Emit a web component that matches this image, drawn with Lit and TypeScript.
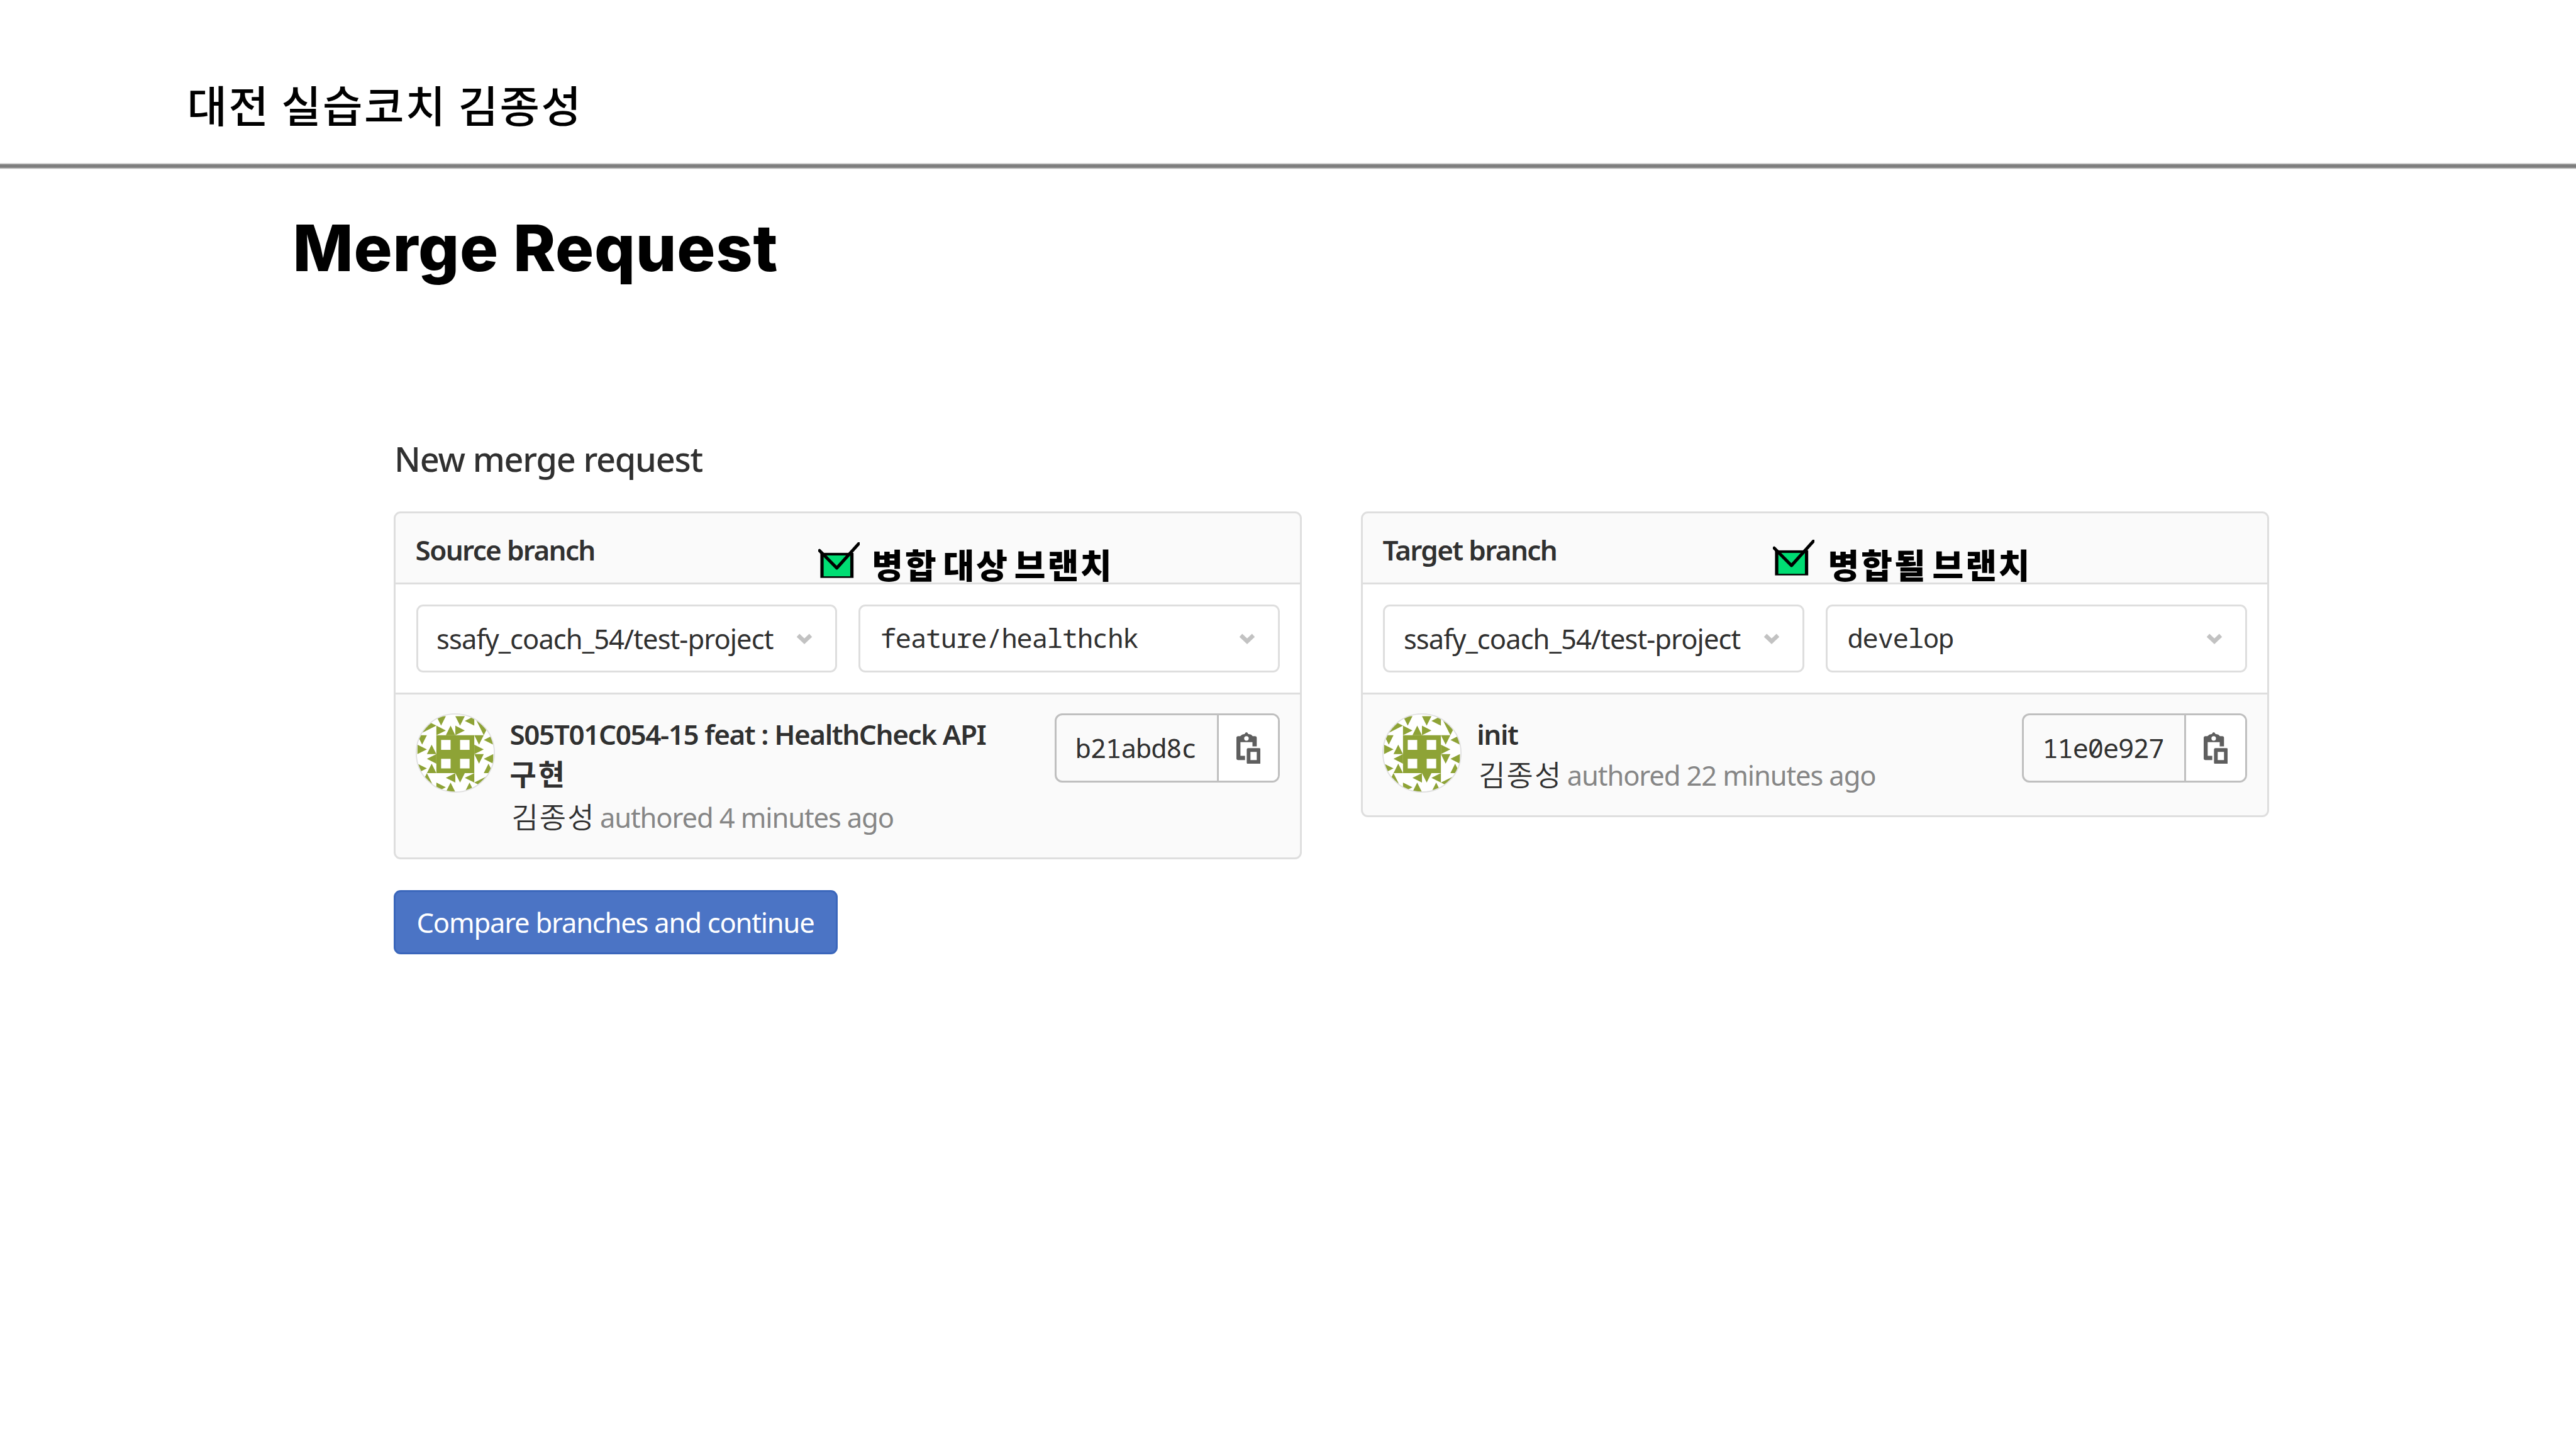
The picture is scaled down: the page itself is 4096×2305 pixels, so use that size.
import { LitElement, html, css, svg, nothing } from "lit";

interface Branch {
  kind: "source" | "target";
  label: string;
  note: string;
  project: string;
  branch: string;
  title: string;
  titleRest?: string;
  author: string;
  authored: string;
  sha: string;
}

const BRANCHES: Branch[] = [
  {
    kind: "source",
    label: "Source branch",
    note: "병합 대상 브랜치",
    project: "ssafy_coach_54/test-project",
    branch: "feature/healthchk",
    title: "S05T01C054-15 feat : HealthCheck API",
    titleRest: "구현",
    author: "김종성",
    authored: "authored 4 minutes ago",
    sha: "b21abd8c",
  },
  {
    kind: "target",
    label: "Target branch",
    note: "병합될 브랜치",
    project: "ssafy_coach_54/test-project",
    branch: "develop",
    title: "init",
    author: "김종성",
    authored: "authored 22 minutes ago",
    sha: "11e0e927",
  },
];

const chevron = html`<svg class="chevron" viewBox="0 0 26 17">
  <path d="M3 3 L13 12.4 L23 3" fill="none" stroke="#c2c2c2" stroke-width="6.6" />
</svg>`;

const clipboard = html`<svg class="clipboard" viewBox="120 166 170 222" fill="#5e5e5e">
  <path
    fill-rule="evenodd"
    d="M120 206 Q120 194 132 194 H146 L160 182 L178 178 Q182 166 190 166 Q198 166 202 178 L222 182 L234 194 H250 Q262 194 262 206 V265 H232 V235 H148 V331 H180 V360 H132 Q120 360 120 348 Z M206 209 A16 16 0 1 0 174 209 A16 16 0 1 0 206 209 Z"
  />
  <path
    fill-rule="evenodd"
    d="M202 277 H280 Q290 277 290 287 V378 Q290 388 280 388 H202 Q192 388 192 378 V287 Q192 277 202 277 Z M218 303 V360 H262 V303 Z"
  />
</svg>`;

const check = html`<svg class="check" viewBox="51 69 288 249">
  <rect x="66" y="143" width="232" height="175" fill="#000" />
  <rect x="89" y="161" width="186" height="146" fill="#00dd73" />
  <path
    d="M60 127 L181 249 L346 66"
    fill="none"
    stroke="#000"
    stroke-width="22"
    stroke-linecap="round"
    stroke-linejoin="round"
  />
</svg>`;

// One quarter of the identicon in grid units; the other three are rotations of it.
const QUARTER =
  "M-2-4H-1L-1.5-3Z M0-4H1L.5-3Z M2-4V-3L1-3.5Z M2-4L3-2L4-4Z M-2-3L-1-2.5L-2-2Z M-1-2H0L-.5-3Z M0-3L1-2.5L0-2Z";

const avatar = html`<svg class="avatar" viewBox="-4.18 -4.3 8.36 8.36">
  <defs>
    <clipPath id="disc"><circle cx="0" cy="-0.12" r="4.12" /></clipPath>
  </defs>
  <circle cx="0" cy="-0.12" r="4.12" fill="#fff" />
  <g clip-path="url(#disc)" fill="#8ea336">
    ${[0, 90, 180, 270].map((a) => svg`<path d=${QUARTER} transform="rotate(${a})" />`)}
    <path
      fill-rule="evenodd"
      d="M-2-2H2V2H-2Z M-1.5-1.5V-.45H-.5V-1.5Z M.5-1.5V-.45H1.5V-1.5Z M-1.5 .5V1.5H-.5V.5Z M.5 .5V1.5H1.5V.5Z"
    />
  </g>
  <circle cx="0" cy="-0.12" r="4.12" fill="none" stroke="#e0e0e0" stroke-width=".12" />
</svg>`;

class BranchCard extends LitElement {
  static properties = { data: { attribute: false } };
  declare data: Branch;

  static styles = css`
    :host {
      display: block;
      box-sizing: border-box;
      border: 3px solid #dedede;
      border-radius: 11px;
      background: #fafafa;
      color: #303030;
      font-family: "Noto Sans", "Noto Sans CJK KR", sans-serif;
    }
    svg {
      display: block;
      flex: none;
    }
    .head {
      position: relative;
      box-sizing: border-box;
      height: 112.6px;
      padding: 6px 0 0 31.6px;
      border-bottom: 3px solid #dedede;
      display: flex;
      align-items: center;
      font-size: 44px;
      font-weight: 600;
      letter-spacing: -1.65px;
      white-space: nowrap;
    }
    .check {
      position: absolute;
      width: 65.5px;
      height: 56.7px;
    }
    .note {
      position: absolute;
      top: 51px;
      font: 900 54px/60px "Noto Sans CJK KR", sans-serif;
      letter-spacing: 3px;
      word-spacing: -7.5px;
      color: #000;
    }
    .source .check {
      left: 672.4px;
      top: 46.2px;
    }
    .source .note {
      left: 757.3px;
    }
    .target .check {
      left: 652.4px;
      top: 42.2px;
    }
    .target .note {
      left: 739.8px;
    }
    .pickers {
      display: grid;
      grid-template-columns: 1fr 1fr;
      gap: 34px;
      padding: 32.9px 32.5px 32.5px;
      background: #fff;
      border-bottom: 3px solid #dedede;
    }
    .picker {
      box-sizing: border-box;
      height: 107.5px;
      border: 3px solid #dedede;
      border-radius: 11px;
      padding: 0 36px 0 29.6px;
      display: flex;
      align-items: center;
      justify-content: space-between;
      font-size: 43.5px;
      letter-spacing: -0.93px;
      white-space: nowrap;
    }
    .mono {
      font-family: "Noto Sans Mono", "Liberation Mono", monospace;
      font-size: 42px;
      letter-spacing: -1.1px;
    }
    .ref {
      padding: 0 0 4px 2px;
    }
    .chevron {
      width: 26px;
      height: 17px;
    }
    .commit {
      display: flex;
      align-items: flex-start;
      padding: 29.5px 32.5px 31px 31.5px;
    }
    .avatar {
      width: 126px;
      height: 126px;
    }
    .text {
      flex: 1;
      min-width: 0;
      margin-left: 24px;
      padding-top: 5px;
      line-height: 64.9px;
      white-space: nowrap;
    }
    .title {
      font-size: 44px;
      line-height: 57.4px;
      font-weight: 600;
      letter-spacing: -1.4px;
    }
    .rest {
      padding-bottom: 1.5px;
      font: 700 46px/64.9px "Noto Sans CJK KR", sans-serif;
      letter-spacing: 3px;
    }
    .meta {
      padding-top: 1px;
      display: flex;
      align-items: baseline;
      font-size: 43.5px;
      letter-spacing: -1.12px;
      color: #868686;
    }
    .author {
      margin: 0 7.5px 0 3px;
      font: 350 46px/64.9px "Noto Sans CJK KR", sans-serif;
      letter-spacing: 2px;
      color: #303030;
    }
    .sha {
      box-sizing: border-box;
      width: 358px;
      height: 110.4px;
      border: 3px solid #bfbfbf;
      border-radius: 12px;
      overflow: hidden;
      display: flex;
      align-items: stretch;
    }
    .hash {
      flex: 1;
      display: flex;
      align-items: center;
      padding: 0 0 1.5px 30px;
    }
    .copy {
      box-sizing: border-box;
      width: 97px;
      border-left: 3px solid #bfbfbf;
      padding-left: 28px;
      background: #fff;
      display: flex;
      align-items: center;
    }
    .clipboard {
      width: 38.7px;
      height: 50.5px;
    }
  `;

  render() {
    const d = this.data;
    return html`
      <div class="head ${d.kind}">
        <span>${d.label}</span>
        ${check}
        <span class="note">${d.note}</span>
      </div>
      <div class="pickers">
        <div class="picker"><span>${d.project}</span>${chevron}</div>
        <div class="picker mono"><span class="ref">${d.branch}</span>${chevron}</div>
      </div>
      <div class="commit">
        ${avatar}
        <div class="text">
          <div class="title">${d.title}</div>
          ${d.titleRest ? html`<div class="rest">${d.titleRest}</div>` : nothing}
          <div class="meta"><span class="author">${d.author}</span><span>${d.authored}</span></div>
        </div>
        <div class="sha">
          <div class="hash mono">${d.sha}</div>
          <div class="copy">${clipboard}</div>
        </div>
      </div>
    `;
  }
}
customElements.define("branch-card", BranchCard);

class AppRoot extends LitElement {
  static styles = css`
    :host {
      display: block;
      box-sizing: border-box;
      width: 100vw;
      height: 100vh;
      overflow: hidden;
      background: #fff;
      color: #000;
    }
    .top {
      box-sizing: border-box;
      height: 259px;
      padding: 125.4px 0 0 297.5px;
      font: 500 69px/80px "Noto Sans CJK KR", sans-serif;
      letter-spacing: 2.4px;
    }
    .rule {
      height: 10px;
      background: linear-gradient(#fff, #8c8c8c 25%, #777 50%, #8c8c8c 75%, #fff);
    }
    h1 {
      margin: 64.8px 0 0 465.5px;
      font: 800 102px/120px Inter, sans-serif;
      letter-spacing: 0.7px;
    }
    .form {
      margin: 240.2px 488px 0 626px;
      font-family: "Noto Sans", sans-serif;
    }
    h2 {
      margin: 0 0 49px 1px;
      font-size: 54px;
      line-height: 70px;
      font-weight: 500;
      letter-spacing: -1.2px;
      color: #303030;
    }
    .cards {
      display: grid;
      grid-template-columns: 1fr 1fr;
      column-gap: 93.6px;
      align-items: start;
    }
    .submit {
      box-sizing: border-box;
      width: 705.6px;
      height: 101.4px;
      margin: 49.5px 0 0;
      padding: 0 0 0 33.5px;
      display: flex;
      align-items: center;
      border: 3px solid #3a66bb;
      border-radius: 11px;
      background: #4b74c5;
      color: #fff;
      font: 400 43.5px "Noto Sans", sans-serif;
      letter-spacing: -1.2px;
      white-space: nowrap;
    }
  `;

  render() {
    return html`
      <header class="top">대전 실습코치 김종성</header>
      <div class="rule"></div>
      <h1>Merge Request</h1>
      <main class="form">
        <h2>New merge request</h2>
        <div class="cards">${BRANCHES.map((b) => html`<branch-card .data=${b}></branch-card>`)}</div>
        <button class="submit">Compare branches and continue</button>
      </main>
    `;
  }
}
customElements.define("app-root", AppRoot);
